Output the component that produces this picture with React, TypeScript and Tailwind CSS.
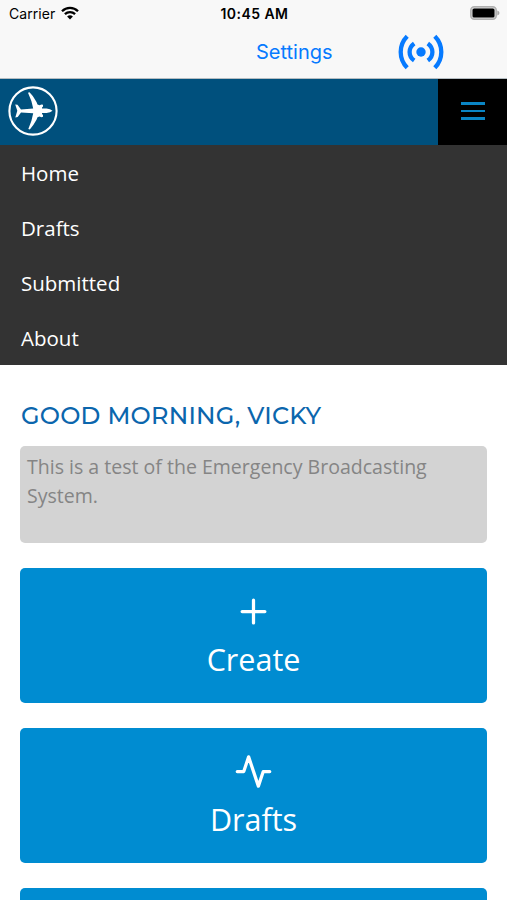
import React, { useState } from 'react';

interface ActionCardProps {
  label?: string;
  children?: React.ReactNode;
}

const menuItems = ['Home', 'Drafts', 'Submitted', 'About'];

const StatusBar: React.FC = () => (
  <div className="grid grid-cols-3 items-center h-[26px] pl-[9px] pr-[7px] text-black font-['Inter',sans-serif]">
    <div className="flex items-center gap-[6px] text-[14px] tracking-[0.05px]">
      <span>Carrier</span>
      <svg width="18" height="14" viewBox="0 0 18 14" fill="none" stroke="currentColor" strokeWidth="2.3">
        <path d="M1 5.2C5.5 0.7 12.5 0.7 17 5.2" />
        <path d="M3.9 8.2C6.8 5.4 11.2 5.4 14.1 8.2" />
        <path d="M9 13.4L6.1 10.5Q9 8 11.9 10.5Z" fill="currentColor" stroke="none" />
      </svg>
    </div>
    <div className="text-center text-[14px] font-semibold tracking-[0.45px] whitespace-nowrap">10:45 AM</div>
    <svg className="justify-self-end" width="30" height="14" viewBox="0 0 30 14">
      <rect x="0.8" y="0.8" width="25.4" height="12.4" rx="3.5" fill="#d8d8d8" stroke="#b0b0b0" strokeWidth="1.5" />
      <rect x="2.5" y="2.5" width="22" height="9" rx="1.6" fill="#000" />
      <path d="M27.3 4.6Q29.5 5.3 29.5 7T27.3 9.4Z" fill="#a9a9a9" />
    </svg>
  </div>
);

const NavigationBar: React.FC = () => (
  <div className="flex items-center h-[52px] pl-[256px] text-[#067aff] font-['Inter',sans-serif]">
    <button className="w-[77px] text-left text-[20px] tracking-[0px] whitespace-nowrap">Settings</button>
    <button className="ml-[65px]" aria-label="Broadcast">
      <svg width="46" height="36" viewBox="0 0 46 36" fill="none" stroke="currentColor" strokeWidth="4.3">
        <circle cx="23" cy="18" r="4.7" fill="currentColor" stroke="none" />
        <path d="M16.2 9.4Q11.6 12.7 11.6 18T16.2 26.6" />
        <path d="M29.8 9.4Q34.4 12.7 34.4 18T29.8 26.6" />
        <path d="M9.2 2.2Q2.7 8.8 2.7 18T9.2 33.8" />
        <path d="M36.8 2.2Q43.3 8.8 43.3 18T36.8 33.8" />
      </svg>
    </button>
  </div>
);

const PlaneLogo: React.FC = () => (
  <svg width="50" height="50" viewBox="0 0 50 50" fill="none">
    <circle cx="25" cy="25" r="23.6" stroke="#fff" strokeWidth="2.1" />
    <path
      fill="#fff"
      d="M44.5 24.8Q42.5 22.9 38.5 22.6H34V21.6L35 20.6V18.8L33.5 18.4L31.5 19.2L29.5 18.4L28.5 16Q25 9.5 21.5 6.3L20 6.8Q23.8 14.5 25.2 22.6L13 23.4L9.5 18.7L7.2 18.5L9.3 24.8L7.3 31.4L9.7 31L13 26.5L25.2 27.3Q24 35 20.3 43L21.8 43.4Q25.5 39.5 28.5 33.8L29.5 31.2L31.5 30.5L33.5 31.2L35 30.7V29L34 28V27H38.5Q42.5 26.8 44.5 24.8Z"
    />
  </svg>
);

const ActionCard: React.FC<ActionCardProps> = ({ label, children }) => (
  <button className="flex flex-col items-center w-full h-[135px] shrink-0 pt-[24px] rounded-[5px] bg-[#008cd1] text-white">
    {children && (
      <svg
        width="39"
        height="39"
        viewBox="0 0 24 24"
        fill="none"
        stroke="currentColor"
        strokeWidth="2"
        strokeLinecap="round"
        strokeLinejoin="round"
      >
        {children}
      </svg>
    )}
    {label && <span className="mt-[6px] text-[30.5px] leading-[45px]">{label}</span>}
  </button>
);

export default function App() {
  const [menuOpen, setMenuOpen] = useState(true);

  return (
    <div className="w-full h-[900px] overflow-hidden bg-white font-['Open_Sans',sans-serif]">
      <div className="h-[79px] bg-[#f8f8f8] border-b border-[#b5bdc2]">
        <StatusBar />
        <NavigationBar />
      </div>

      <header className="flex items-start justify-between h-[66px] pl-[8px] bg-[#00507d]">
        <div className="pt-[7px]">
          <PlaneLogo />
        </div>
        <button
          onClick={() => setMenuOpen(!menuOpen)}
          className="flex flex-col items-center justify-center gap-[5px] w-[69px] h-full pb-[2px] bg-black"
          aria-label="Menu"
        >
          <span className="w-[24px] h-[2.5px] bg-[#0a85c4]" />
          <span className="w-[24px] h-[2.5px] bg-[#0a85c4]" />
          <span className="w-[24px] h-[2.5px] bg-[#0a85c4]" />
        </button>
      </header>

      {menuOpen && (
        <nav className="bg-[#333333] text-white text-[20.5px]">
          {menuItems.map((item) => (
            <div key={item} className="flex items-center h-[55px] pt-[2px] px-[21px]">
              {item}
            </div>
          ))}
        </nav>
      )}

      <main className="flex flex-col px-[20px] pt-[36px]">
        <h1 className="h-[30px] pl-px text-[#0b66ad] text-[24px] leading-[30px] font-medium tracking-[0.25px] whitespace-nowrap font-['Montserrat','Inter',sans-serif]">
          GOOD MORNING, VICKY
        </h1>
        <div className="mt-[15px] h-[97px] pl-[7px] pr-[6px] pt-[6px] rounded-[5px] bg-[#d3d3d3] text-[#858585] text-[19.55px] leading-[29px]">
          This is a test of the Emergency Broadcasting System.
        </div>
        <div className="flex flex-col gap-[25px] mt-[25px]">
          <ActionCard label="Create">
            <path d="M12 5v14M5 12h14" />
          </ActionCard>
          <ActionCard label="Drafts">
            <polyline points="22 12 18 12 15 21 9 3 6 12 2 12" />
          </ActionCard>
          <ActionCard />
        </div>
      </main>
    </div>
  );
}
